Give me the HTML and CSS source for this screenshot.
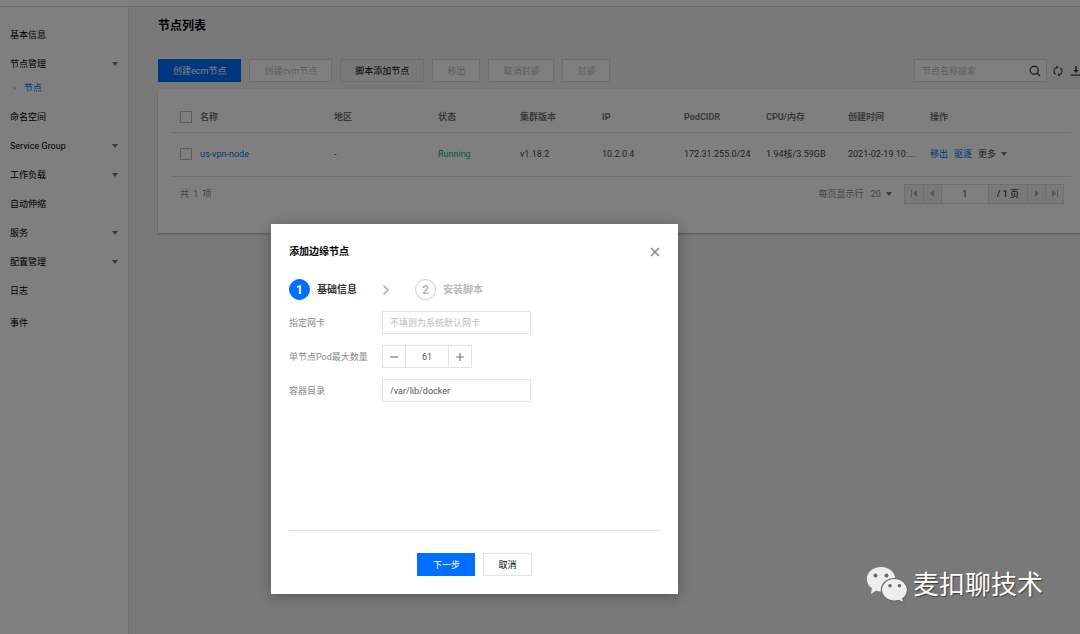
FILE: index.html
```html
<!DOCTYPE html>
<html lang="zh-CN">

<head>
    <meta charset="UTF-8" />
    <meta name="viewport" content="width=device-width, initial-scale=1.0" />
    <title>节点列表</title>
    <link rel="stylesheet" href="styles.css">
</head>

<body>
    <div class="topbar"></div>
    <div class="layout">
        <nav class="sidebar">
            <ul class="menu">
                <li><a href="#">基本信息</a></li>
                <li><a href="#">节点管理<i class="caret"></i></a>
                    <ul class="submenu">
                        <li><a href="#" class="active">节点</a></li>
                    </ul>
                </li>
                <li><a href="#">命名空间</a></li>
                <li><a href="#">Service Group<i class="caret"></i></a></li>
                <li><a href="#">工作负载<i class="caret"></i></a></li>
                <li><a href="#">自动伸缩</a></li>
                <li><a href="#">服务<i class="caret"></i></a></li>
                <li><a href="#">配置管理<i class="caret"></i></a></li>
                <li><a href="#">日志</a></li>
                <li class="menu-last"><a href="#">事件</a></li>
            </ul>
        </nav>

        <main class="main">
            <div class="content">
                <h1>节点列表</h1>

                <div class="toolbar">
                    <button type="button" class="btn primary">创建ecm节点</button>
                    <button type="button" class="btn" disabled>创建cvm节点</button>
                    <button type="button" class="btn weak">脚本添加节点</button>
                    <button type="button" class="btn" disabled>移出</button>
                    <button type="button" class="btn" disabled>取消封锁</button>
                    <button type="button" class="btn" disabled>封锁</button>
                    <div class="tools">
                        <div class="search">
                            <input type="text" placeholder="节点名称搜索" aria-label="节点名称搜索" />
                            <button type="button" class="icon-btn" aria-label="搜索">
                                <svg width="12" height="12" viewBox="0 0 12 12" fill="none" stroke="#444" stroke-width="1.4">
                                    <circle cx="5.2" cy="5.2" r="4" />
                                    <path d="M8.2 8.2L11 11" />
                                </svg>
                            </button>
                        </div>
                        <button type="button" class="icon-btn" aria-label="刷新">
                            <svg width="12" height="12" viewBox="0 0 12 12" fill="none" stroke="#444" stroke-width="1.2">
                                <path d="M3.6 9.3A4 4 0 0 1 4.6 2.3M8.4 2.7A4 4 0 0 1 7.4 9.7" />
                                <path d="M4.2 0.2L6.6 1.9L4.6 4z M7.8 11.8L5.4 10.1L7.4 8z" fill="#444" stroke="none" />
                            </svg>
                        </button>
                        <button type="button" class="icon-btn" aria-label="下载">
                            <svg width="12" height="12" viewBox="0 0 12 12" fill="#444">
                                <path d="M5.2 1h1.6v4h2L6 8L3.2 5h2z M0.5 9.4h11v1.4h-11z" />
                            </svg>
                        </button>
                    </div>
                </div>

                <section class="card">
                    <table>
                        <colgroup>
                            <col class="col-check">
                            <col class="col-name">
                            <col class="col-region">
                            <col class="col-std">
                            <col class="col-std">
                            <col class="col-std">
                            <col class="col-std">
                            <col class="col-std">
                            <col class="col-std">
                            <col>
                        </colgroup>
                        <thead>
                            <tr>
                                <th><input type="checkbox" aria-label="全选" /></th>
                                <th>名称</th>
                                <th>地区</th>
                                <th>状态</th>
                                <th>集群版本</th>
                                <th>IP</th>
                                <th>PodCIDR</th>
                                <th>CPU/内存</th>
                                <th>创建时间</th>
                                <th>操作</th>
                            </tr>
                        </thead>
                        <tbody>
                            <tr>
                                <td><input type="checkbox" aria-label="us-vpn-node" /></td>
                                <td><a href="#">us-vpn-node</a></td>
                                <td>-</td>
                                <td class="running">Running</td>
                                <td>v1.18.2</td>
                                <td>10.2.0.4</td>
                                <td>172.31.255.0/24</td>
                                <td>1.94核/3.59GB</td>
                                <td>2021-02-19 10:...</td>
                                <td>
                                    <div class="actions">
                                        <a href="#">移出</a>
                                        <a href="#">驱逐</a>
                                        <button type="button" class="more">更多<i class="caret"></i></button>
                                    </div>
                                </td>
                            </tr>
                        </tbody>
                    </table>

                    <div class="table-footer">
                        <span class="total">共 1 项</span>
                        <span>每页显示行</span>
                        <button type="button" class="page-size">20<i class="caret"></i></button>
                        <div class="pager">
                            <button type="button" aria-label="第一页">
                                <svg width="6" height="7" viewBox="0 0 6 7" fill="#aaa"><path d="M0 0h1v7h-1z M6 0v7L2 3.5z" /></svg>
                            </button>
                            <button type="button" aria-label="上一页">
                                <svg width="6" height="7" viewBox="0 0 6 7" fill="#aaa"><path d="M5 0v7L1 3.5z" /></svg>
                            </button>
                            <input type="text" value="1" aria-label="页码" />
                            <span class="page-count">/ 1 页</span>
                            <button type="button" aria-label="下一页">
                                <svg width="6" height="7" viewBox="0 0 6 7" fill="#aaa"><path d="M1 0v7L5 3.5z" /></svg>
                            </button>
                            <button type="button" aria-label="最后一页">
                                <svg width="6" height="7" viewBox="0 0 6 7" fill="#aaa"><path d="M5 0h1v7h-1z M0 0v7L4 3.5z" /></svg>
                            </button>
                        </div>
                    </div>
                </section>
            </div>
        </main>
    </div>

    <div class="mask"></div>

    <div class="dialog" role="dialog" aria-labelledby="dialog-title">
        <div class="dialog-head">
            <h2 id="dialog-title">添加边缘节点</h2>
            <button type="button" class="icon-btn" aria-label="关闭">
                <svg width="10" height="10" viewBox="0 0 10 10" stroke="#888" stroke-width="1.5">
                    <path d="M1 1L9 9M9 1L1 9" />
                </svg>
            </button>
        </div>

        <ol class="steps">
            <li class="current"><span class="num">1</span>基础信息</li>
            <li class="arrow" aria-hidden="true">
                <svg width="8" height="12" viewBox="0 0 8 12" fill="none" stroke="#aaa" stroke-width="1.5">
                    <path d="M1.5 1.5L6 6L1.5 10.5" />
                </svg>
            </li>
            <li><span class="num">2</span>安装脚本</li>
        </ol>

        <form class="form">
            <label for="nic">指定网卡</label>
            <input type="text" id="nic" class="field" placeholder="不填则为系统默认网卡" />

            <label for="pods">单节点Pod最大数量</label>
            <div class="stepper">
                <button type="button" aria-label="减少">
                    <svg width="8" height="8" viewBox="0 0 8 8" fill="#777"><path d="M0 3.4h8v1.2h-8z" /></svg>
                </button>
                <input type="text" id="pods" value="61" />
                <button type="button" aria-label="增加">
                    <svg width="8" height="8" viewBox="0 0 8 8" fill="#777"><path d="M0 3.4h8v1.2h-8z M3.4 0h1.2v8h-1.2z" /></svg>
                </button>
            </div>

            <label for="dir">容器目录</label>
            <input type="text" id="dir" class="field" value="/var/lib/docker" />
        </form>

        <div class="dialog-foot">
            <button type="button" class="btn primary next">下一步</button>
            <button type="button" class="btn">取消</button>
        </div>
    </div>

    <div class="watermark">
        <svg width="42" height="38" viewBox="0 0 42 38">
            <path d="M15 1C7 1 .8 6.300 .8 13c0 3.800 2 7.100 5.200 9.300L4.800 28l5.200-3.200c1.600.5 3.300.7 5 .7 8 0 14.200-5.500 14.200-12.500S23 1 15 1z" fill="#eee" />
            <path d="M28.400 12.500c-7.200 0-13 5-13 11.300s5.800 11.300 13 11.300c1.500 0 3-.2 4.400-.7l5.200 2.600-1.300-4.200c2.900-2.100 4.700-5.300 4.700-9 0-6.300-5.800-11.300-13-11.300z" fill="#eee" stroke="#686868" stroke-width="1.200" />
            <g fill="#686868">
                <circle cx="9.500" cy="9.500" r="2" />
                <circle cx="20.500" cy="9.500" r="2" />
                <circle cx="24" cy="19.800" r="1.800" />
                <circle cx="33.500" cy="19.800" r="1.800" />
            </g>
        </svg>
        <span>麦扣聊技术</span>
    </div>
</body>

</html>
```

FILE: styles.css
```css
:root {
    --primary: #006eff;
    --text: #000;
    --muted: #888;
    --line: #ddd;
    --page-bg: #f2f2f2;
}

* {
    box-sizing: border-box;
}

body {
    margin: 0;
    min-height: 100vh;
    display: flex;
    flex-direction: column;
    position: relative;
    overflow: hidden;
    font-family: Roboto, "Noto Sans CJK SC", sans-serif;
    font-size: 9px;
    line-height: 14px;
    color: var(--text);
    background: var(--page-bg);
}

button,
input {
    font: inherit;
    color: inherit;
    margin: 0;
}

button {
    display: inline-flex;
    align-items: center;
    justify-content: center;
    padding: 0;
    border: none;
    background: none;
    cursor: pointer;
}

svg {
    display: block;
}

a {
    color: var(--primary);
    text-decoration: none;
}

ul,
ol {
    list-style: none;
    margin: 0;
    padding: 0;
}

.caret {
    border: 3px solid transparent;
    border-top: 4px solid #777;
    border-bottom: none;
}

.topbar {
    height: 7px;
    background: #fff;
    border-bottom: 1px solid var(--line);
}

.layout {
    flex: 1;
    display: flex;
}

/* sidebar */
.sidebar {
    flex: 0 0 129px;
    padding-top: 13px;
    background: #fff;
    border-right: 1px solid var(--line);
}

.menu a {
    display: flex;
    align-items: center;
    justify-content: space-between;
    height: 29px;
    padding: 0 10px;
    color: var(--text);
}

.menu .submenu a {
    justify-content: flex-start;
    height: 24px;
    padding: 0 0 4px 13px;
}

.menu .submenu .active {
    color: var(--primary);
}

.submenu a::before {
    content: "";
    width: 3px;
    height: 3px;
    margin-right: 8px;
    border-radius: 50%;
    background: #ccc;
}

.menu-last {
    margin-top: 3px;
}

/* main area */
.main {
    flex: 1;
    min-width: 0;
    padding: 10px 0 0 29px;
    overflow: hidden;
}

.content {
    margin-right: -5px;
}

h1 {
    margin: 0 0 24px;
    font-size: 12px;
    line-height: 18px;
}

.toolbar {
    display: flex;
    gap: 8px;
    margin-bottom: 7px;
}

.btn {
    height: 23px;
    padding: 0 14px;
    border: 1px solid var(--line);
    background: #fff;
    white-space: nowrap;
}

.btn.primary {
    color: #fff;
    border-color: var(--primary);
    background: var(--primary);
}

.btn.weak {
    background: var(--page-bg);
}

.btn:disabled {
    color: #bbb;
    cursor: default;
}

.tools {
    display: flex;
    align-items: center;
    gap: 4px;
    margin-left: auto;
    padding-right: 2px;
}

.search {
    display: flex;
    align-items: center;
    width: 133px;
    height: 23px;
    padding: 0 4px 0 7px;
    border: 1px solid var(--line);
    background: #fff;
}

.search input {
    flex: 1;
    min-width: 0;
    padding: 0;
    border: none;
    background: none;
}

.icon-btn {
    flex: none;
    min-width: 14px;
    height: 14px;
}

::placeholder {
    color: #bbb;
    opacity: 1;
}

.card {
    padding: 14px 14px 22px;
    background: #fff;
    box-shadow: 0 1px 2px rgba(0, 0, 0, 0.3);
}

table {
    width: 100%;
    table-layout: fixed;
    border-collapse: collapse;
}

.col-check {
    width: 28px;
}

.col-name {
    width: 134px;
}

.col-region {
    width: 104px;
}

.col-std {
    width: 82px;
}

th,
td {
    padding: 0;
    border-bottom: 1px solid var(--line);
    text-align: left;
    white-space: nowrap;
    color: #444;
}

th {
    height: 29px;
    color: #777;
}

td {
    height: 44px;
}

th:first-child,
td:first-child {
    padding-left: 8px;
}

input[type="checkbox"] {
    appearance: none;
    display: block;
    width: 12px;
    height: 12px;
    border: 1px solid #bbb;
    background: #fff;
}

.running {
    color: #0abf5b;
}

.actions {
    display: flex;
    gap: 6px;
}

.more,
.page-size {
    gap: 5px;
}

.table-footer {
    display: flex;
    align-items: center;
    gap: 7px;
    height: 34px;
    padding: 0 7px 0 8px;
    color: var(--muted);
}

.total {
    margin-right: auto;
    word-spacing: 2px;
}

.pager {
    display: flex;
    height: 20px;
    margin-left: 5px;
    border: 1px solid var(--line);
    background: var(--page-bg);
    color: #444;
}

.pager button {
    width: 18px;
}

.pager > * + * {
    border: none;
    border-left: 1px solid var(--line);
}

.pager input {
    width: 47px;
    padding: 0;
    text-align: center;
    background: #fff;
}

.page-count {
    padding: 2px 8px;
    color: var(--text);
}

/* dialog */
.mask {
    position: absolute;
    inset: 0;
    background: rgba(0, 0, 0, 0.5);
}

.dialog {
    --line: #e2e2e2;
    position: absolute;
    top: 224px;
    left: 271px;
    display: flex;
    flex-direction: column;
    width: 407px;
    height: 370px;
    padding: 18px;
    background: #fff;
    box-shadow: 0 2px 12px rgba(0, 0, 0, 0.3);
}

.dialog-head {
    display: flex;
    align-items: center;
    justify-content: space-between;
    height: 20px;
}

h2 {
    margin: 0;
    font-size: 10px;
}

.dialog-head .icon-btn {
    width: 10px;
    min-width: 0;
}

.steps {
    display: flex;
    align-items: center;
    margin: 17px 0 11px;
    font-size: 10px;
    font-weight: bold;
    color: #bbb;
}

.steps li {
    display: flex;
    align-items: center;
    gap: 7px;
}

.steps .current {
    color: #333;
}

.steps .arrow {
    margin: 0 25px;
}

.num {
    display: flex;
    align-items: center;
    justify-content: center;
    width: 21px;
    height: 21px;
    border: 1px solid #ccc;
    border-radius: 50%;
    font-size: 12px;
}

.current .num {
    color: #fff;
    border-color: var(--primary);
    background: var(--primary);
}

.form {
    display: grid;
    grid-template-columns: 93px 149px;
    row-gap: 11px;
    align-items: center;
    color: var(--muted);
}

.field {
    height: 23px;
    padding: 0 7px;
    border: 1px solid var(--line);
    color: #555;
}

.stepper {
    display: flex;
    justify-self: start;
    height: 23px;
    border: 1px solid var(--line);
}

.stepper button {
    width: 22px;
}

.stepper input {
    width: 44px;
    padding: 0;
    border: solid var(--line);
    border-width: 0 1px;
    text-align: center;
    color: #555;
}

.dialog-foot {
    display: flex;
    justify-content: center;
    gap: 8px;
    margin-top: auto;
    padding-top: 22px;
    border-top: 1px solid var(--line);
}

.next {
    min-width: 58px;
}

/* account mark over the page */
.watermark {
    position: absolute;
    right: 37px;
    bottom: 30px;
    display: flex;
    align-items: center;
    gap: 5px;
    font-size: 26px;
    line-height: 38px;
    color: #fff;
    text-shadow: 1px 1px 1px rgba(0, 0, 0, 0.5);
}
```
